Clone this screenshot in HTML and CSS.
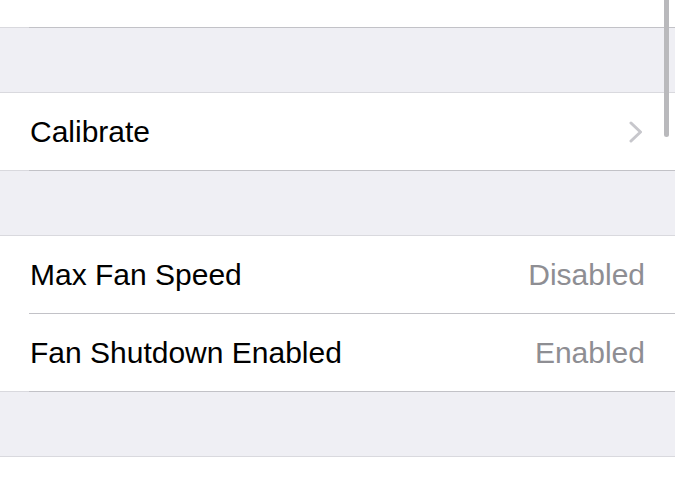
FILE: index.html
```html
<!DOCTYPE html>
<html lang="en">
<head>
    <meta charset="UTF-8">
    <meta name="viewport" content="width=device-width, initial-scale=1.0">
    <title>Fan Settings</title>
    <link rel="stylesheet" href="styles.css">
</head>
<body>

<div class="table">
    <section class="group group-top">
        <div class="cell cell-cut"></div>
    </section>

    <div class="gap"></div>

    <section class="group">
        <div class="cell">
            <span class="label">Calibrate</span>
            <svg class="chevron" width="14" height="22" viewBox="0 0 14 22">
                <polyline points="2,2 11.5,11 2,20" fill="none" stroke="#c7c7cc" stroke-width="3" stroke-linecap="round" stroke-linejoin="round"/>
            </svg>
        </div>
    </section>

    <div class="gap"></div>

    <section class="group">
        <div class="cell">
            <span class="label">Max Fan Speed</span>
            <span class="value">Disabled</span>
        </div>
        <div class="cell">
            <span class="label">Fan Shutdown Enabled</span>
            <span class="value">Enabled</span>
        </div>
    </section>

    <div class="gap"></div>

    <section class="group group-bottom"></section>
</div>

<div class="scrollbar"></div>

</body>
</html>
```

FILE: styles.css
```css
:root {
    --bg-color: #efeff4;
    --line-light: #d9d9de;
    --line-dark: #c2c2c7;
    --value-color: #8e8e93;
    --font-family: "Liberation Sans", Arial, sans-serif;
}
body {
    font-family: var(--font-family);
    background-color: var(--bg-color);
    color: #000;
    margin: 0;
    padding: 0;
    height: 479px;
    overflow: hidden;
}
.table {
    display: flex;
    flex-direction: column;
}
.group {
    background-color: #fff;
    border-top: 1px solid var(--line-light);
    border-bottom: 1px solid var(--line-light);
}
.group-top {
    border-top: none;
}
.group-bottom {
    border-bottom: none;
    height: 40px;
}
.gap {
    height: 64px;
}
.cell {
    box-sizing: border-box;
    height: 78px;
    margin-left: 29px;
    padding-right: 30px;
    border-bottom: 1px solid var(--line-dark);
    display: flex;
    align-items: center;
    justify-content: space-between;
    font-size: 30px;
}
.cell:last-child {
    margin-bottom: -1px;
}
.cell-cut {
    height: 28px;
}
.label {
    padding-left: 1px;
}
.value {
    color: var(--value-color);
}
.chevron {
    margin-right: 2px;
    margin-top: 1px;
}
.scrollbar {
    position: absolute;
    top: -4px;
    left: 664px;
    width: 5px;
    height: 141px;
    border-radius: 3px;
    background-color: #b9b9bc;
}
```
